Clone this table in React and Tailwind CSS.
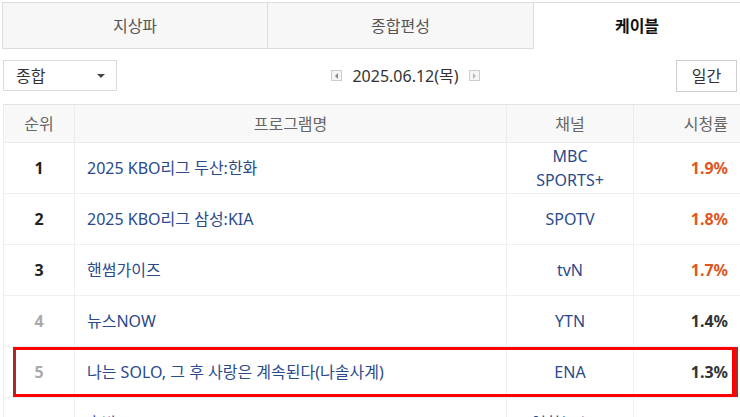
const rows = [
  { rank: 1, title: "2025 KBO리그 두산:한화", channel: ["MBC", "SPORTS+"], rating: "1.9%", hot: true },
  { rank: 2, title: "2025 KBO리그 삼성:KIA", channel: ["SPOTV"], rating: "1.8%", hot: true },
  { rank: 3, title: "핸썸가이즈", channel: ["tvN"], rating: "1.7%", hot: true },
  { rank: 4, title: "뉴스NOW", channel: ["YTN"], rating: "1.4%" },
  { rank: 5, title: "나는 SOLO, 그 후 사랑은 계속된다(나솔사계)", channel: ["ENA"], rating: "1.3%", marked: true },
  { rank: 6, title: "홍반 600", channel: ["연합뉴스TV"], rating: "1.2%" },
];

const cols = "grid grid-cols-[71px_432px_127px_1fr]";

export default function App() {
  return (
    <div
      className="w-[740px] h-[417px] overflow-hidden bg-white"
      style={{ fontFamily: '"Noto Sans", "Noto Sans CJK KR", sans-serif' }}
    >
      {/* Tabs */}
      <div className="mt-[2px] ml-[2px] grid grid-cols-[266px_266px_1fr] h-[47px] text-[16px]">
        <div className="flex items-center justify-center bg-[#f7f7f7] border border-[#dcdcdc] text-[#555]">지상파</div>
        <div className="flex items-center justify-center bg-[#f7f7f7] border border-l-0 border-[#dcdcdc] text-[#555]">종합편성</div>
        <div className="flex items-center justify-center bg-white border-t border-[#dcdcdc] font-bold text-[#111]">케이블</div>
      </div>

      {/* Controls */}
      <div className="mt-[11px] flex items-center justify-between pl-[3px] pr-[3px] h-[31px]">
        <div className="w-[114px] h-[31px] border border-[#dcdcdc] flex items-center justify-between pl-[12px] pr-[11px] text-[16px] text-[#333]">
          <span>종합</span>
          <span className="w-0 h-0 border-l-[4px] border-r-[4px] border-t-[4px] border-l-transparent border-r-transparent border-t-[#444]"></span>
        </div>
        <div className="flex items-center gap-[10px] text-[16px] text-[#333] ml-[18px]">
          <span className="w-[11px] h-[11px] border border-[#ccc] bg-[#f5f5f5] flex items-center justify-center">
            <span className="w-0 h-0 border-t-[3px] border-b-[3px] border-r-[3px] border-t-transparent border-b-transparent border-r-[#888]"></span>
          </span>
          <span>2025.06.12(목)</span>
          <span className="w-[11px] h-[11px] border border-[#ccc] bg-[#f5f5f5] flex items-center justify-center">
            <span className="w-0 h-0 border-t-[3px] border-b-[3px] border-l-[3px] border-t-transparent border-b-transparent border-l-[#bbb]"></span>
          </span>
        </div>
        <div className="w-[61px] h-[32px] border border-[#cfcfcf] flex items-center justify-center text-[16px] text-[#333]">일간</div>
      </div>

      {/* Table */}
      <div className="mt-[13px] ml-[3px] border-t border-[#e3e3e3]">
        <div className={`${cols} h-[38px] bg-[#f8f8f8] text-[16px] text-[#666] border-b border-[#ececec]`}>
          <div className="flex items-center justify-center border-l border-[#ececec]">순위</div>
          <div className="flex items-center justify-center border-l border-[#ececec]">프로그램명</div>
          <div className="flex items-center justify-center border-l border-[#ececec]">채널</div>
          <div className="flex items-center justify-end pr-[12px] border-l border-[#ececec]">시청률</div>
        </div>
        {rows.map((r) => (
          <div key={r.rank} className={`${cols} relative h-[51px] border-b border-[#efefef] text-[16px]`}>
            <div className={`flex items-center justify-center border-l border-[#efefef] font-bold ${r.rank <= 3 ? "text-[#222]" : "text-[#aaa]"}`}>
              {r.rank}
            </div>
            <div className="flex items-center pl-[12px] border-l border-[#efefef] text-[#2a4a8c]">{r.title}</div>
            <div className="flex flex-col items-center justify-center border-l border-[#efefef] text-[#2a4a8c] leading-[24px]">
              {r.channel.map((c) => (
                <span key={c}>{c}</span>
              ))}
            </div>
            <div className={`flex items-center justify-end pr-[12px] border-l border-[#efefef] font-bold ${r.hot ? "text-[#e0561f]" : "text-[#333]"}`}>
              {r.rating}
            </div>
            {r.marked && (
              <div className="absolute left-[10px] right-[5px] top-[0px] bottom-[0px] border-[3px] border-[#f00] border-l-[#a82a2a] pointer-events-none">
                <div className="absolute right-[-6px] top-[-3px] bottom-[-3px] w-[3px] bg-[#a82a2a]"></div>
              </div>
            )}
          </div>
        ))}
      </div>
    </div>
  );
}
